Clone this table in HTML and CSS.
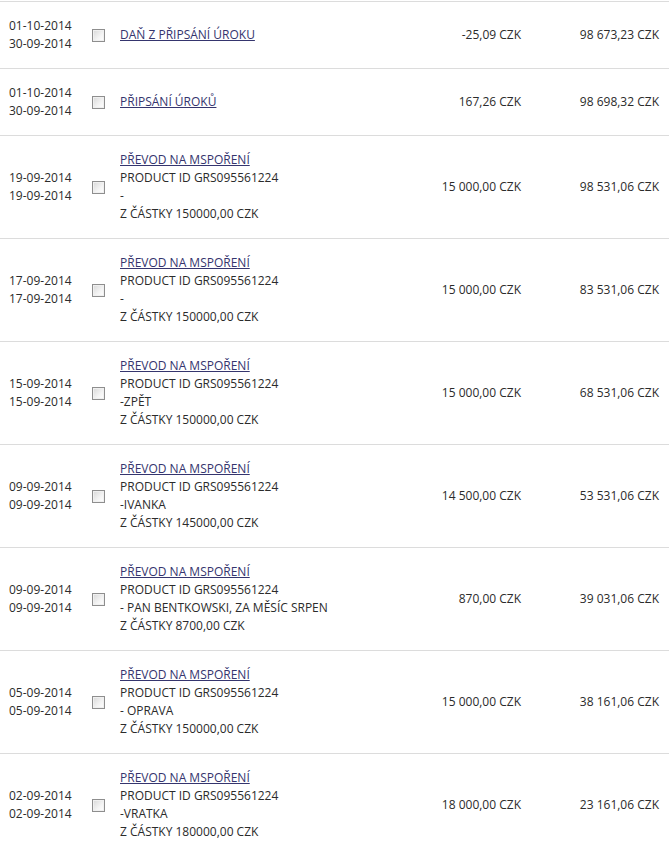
FILE: index.html
```html
<!DOCTYPE html>
<html lang="cs">
<head>
<meta charset="utf-8">
<link rel="stylesheet" href="styles.css">
</head>
<body>
<div class="list">
  <div class="row">
    <div class="dates"><div>01-10-2014</div><div>30-09-2014</div></div>
    <div class="check"><span class="box"></span></div>
    <div class="desc"><a href="#">DAŇ Z PŘIPSÁNÍ ÚROKU</a></div>
    <div class="amount">-25,09 CZK</div>
    <div class="balance">98 673,23 CZK</div>
  </div>
  <div class="row">
    <div class="dates"><div>01-10-2014</div><div>30-09-2014</div></div>
    <div class="check"><span class="box"></span></div>
    <div class="desc"><a href="#">PŘIPSÁNÍ ÚROKŮ</a></div>
    <div class="amount">167,26 CZK</div>
    <div class="balance">98 698,32 CZK</div>
  </div>
  <div class="row">
    <div class="dates"><div>19-09-2014</div><div>19-09-2014</div></div>
    <div class="check"><span class="box"></span></div>
    <div class="desc"><a href="#">PŘEVOD NA MSPOŘENÍ</a><div>PRODUCT ID GRS095561224</div><div>-</div><div>Z ČÁSTKY 150000,00 CZK</div></div>
    <div class="amount">15 000,00 CZK</div>
    <div class="balance">98 531,06 CZK</div>
  </div>
  <div class="row">
    <div class="dates"><div>17-09-2014</div><div>17-09-2014</div></div>
    <div class="check"><span class="box"></span></div>
    <div class="desc"><a href="#">PŘEVOD NA MSPOŘENÍ</a><div>PRODUCT ID GRS095561224</div><div>-</div><div>Z ČÁSTKY 150000,00 CZK</div></div>
    <div class="amount">15 000,00 CZK</div>
    <div class="balance">83 531,06 CZK</div>
  </div>
  <div class="row">
    <div class="dates"><div>15-09-2014</div><div>15-09-2014</div></div>
    <div class="check"><span class="box"></span></div>
    <div class="desc"><a href="#">PŘEVOD NA MSPOŘENÍ</a><div>PRODUCT ID GRS095561224</div><div>-ZPĚT</div><div>Z ČÁSTKY 150000,00 CZK</div></div>
    <div class="amount">15 000,00 CZK</div>
    <div class="balance">68 531,06 CZK</div>
  </div>
  <div class="row">
    <div class="dates"><div>09-09-2014</div><div>09-09-2014</div></div>
    <div class="check"><span class="box"></span></div>
    <div class="desc"><a href="#">PŘEVOD NA MSPOŘENÍ</a><div>PRODUCT ID GRS095561224</div><div>-IVANKA</div><div>Z ČÁSTKY 145000,00 CZK</div></div>
    <div class="amount">14 500,00 CZK</div>
    <div class="balance">53 531,06 CZK</div>
  </div>
  <div class="row">
    <div class="dates"><div>09-09-2014</div><div>09-09-2014</div></div>
    <div class="check"><span class="box"></span></div>
    <div class="desc"><a href="#">PŘEVOD NA MSPOŘENÍ</a><div>PRODUCT ID GRS095561224</div><div>- PAN BENTKOWSKI, ZA MĚSÍC SRPEN</div><div>Z ČÁSTKY 8700,00 CZK</div></div>
    <div class="amount">870,00 CZK</div>
    <div class="balance">39 031,06 CZK</div>
  </div>
  <div class="row">
    <div class="dates"><div>05-09-2014</div><div>05-09-2014</div></div>
    <div class="check"><span class="box"></span></div>
    <div class="desc"><a href="#">PŘEVOD NA MSPOŘENÍ</a><div>PRODUCT ID GRS095561224</div><div>- OPRAVA</div><div>Z ČÁSTKY 150000,00 CZK</div></div>
    <div class="amount">15 000,00 CZK</div>
    <div class="balance">38 161,06 CZK</div>
  </div>
  <div class="row">
    <div class="dates"><div>02-09-2014</div><div>02-09-2014</div></div>
    <div class="check"><span class="box"></span></div>
    <div class="desc"><a href="#">PŘEVOD NA MSPOŘENÍ</a><div>PRODUCT ID GRS095561224</div><div>-VRATKA</div><div>Z ČÁSTKY 180000,00 CZK</div></div>
    <div class="amount">18 000,00 CZK</div>
    <div class="balance">23 161,06 CZK</div>
  </div>
</div>
</body>
</html>
```
FILE: styles.css
```css
html, body {
  margin: 0;
  padding: 0;
  background: #fff;
}
body {
  font-family: "Open Sans", "Noto Sans", sans-serif;
  font-size: 12px;
  line-height: 18px;
  color: #2b2b2b;
}
.list {
  margin-top: 1px;
  border-top: 1px solid #dcdcdc;
}
.row {
  display: flex;
  align-items: center;
  padding: 15px 0;
  border-bottom: 1px solid #dcdcdc;
}
.dates {
  width: 83px;
  padding-left: 9px;
  flex: none;
}
.check {
  width: 28px;
  flex: none;
  display: flex;
}
.box {
  display: block;
  width: 11px;
  height: 11px;
  border: 1px solid #8e8e8e;
  background: linear-gradient(135deg, #d8d8d8 0%, #f4f4f4 60%, #ffffff 100%);
  box-shadow: inset 0 0 0 1px #f0f0f0;
}
.desc {
  flex: none;
  width: 250px;
  white-space: nowrap;
}
.desc a {
  color: #35356e;
  text-decoration: underline;
}
.amount {
  width: 151px;
  flex: none;
  text-align: right;
}
.balance {
  width: 138px;
  flex: none;
  text-align: right;
}
```
